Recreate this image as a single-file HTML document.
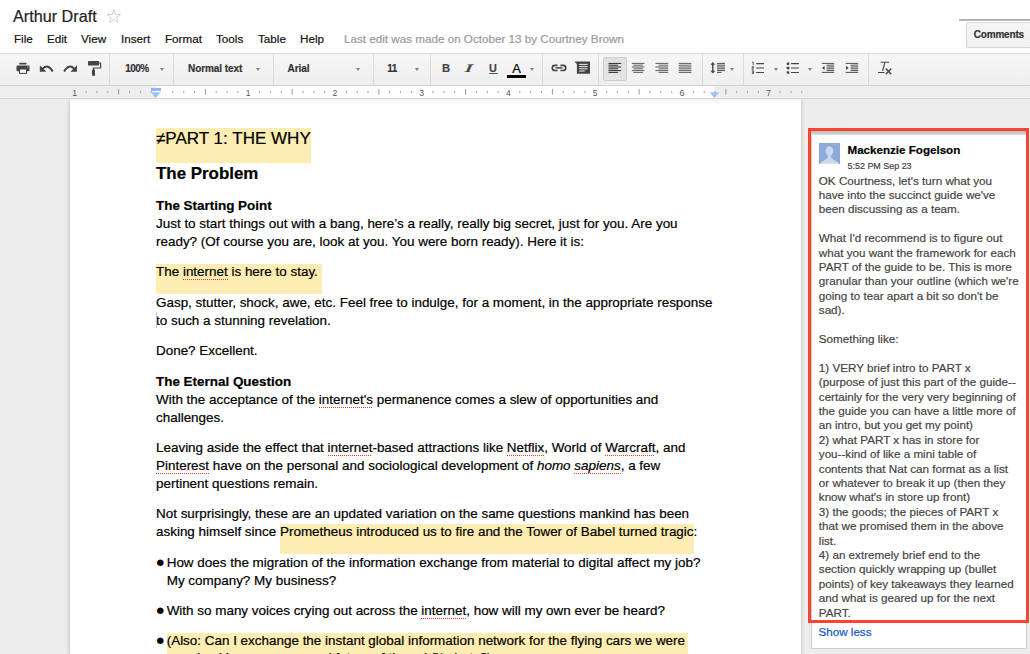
<!DOCTYPE html>
<html><head><meta charset="utf-8"><title>Arthur Draft</title>
<style>
*{box-sizing:border-box}
html,body{margin:0;padding:0}
body{-webkit-text-stroke-width:.2px;width:1030px;height:654px;overflow:hidden;position:relative;background:#fff;font-family:"Liberation Sans",sans-serif;color:#000}
.abs{position:absolute;white-space:nowrap}
#title{left:13px;top:3.8px;font-size:16.2px;line-height:24px;color:#222}
.menu{top:31.8px;font-size:11.66px;line-height:14px;color:#111}
#lastedit{color:#9a9a9a}
#cline{left:959px;top:18.6px;width:71px;height:2.6px;background:linear-gradient(#a6a6a6,#c4c4c4)}
#cbtn{left:966px;top:22px;width:70px;height:26px;border:1px solid #d6d6d6;border-radius:2px;background:linear-gradient(#f5f5f5,#f0f0f0);font-weight:bold;font-size:10px;letter-spacing:-.17px;line-height:24px;padding-left:6.7px;color:#333}
#toolbar{left:0;top:53px;width:1030px;height:33px;border-top:1px solid #d9d9d9;border-bottom:1px solid #d2d2d2;background:linear-gradient(#f6f6f6,#efefef)}
.sep{top:54px;width:1px;height:31px;background:#dadada}
.tbt{top:61.5px;font-size:10px;letter-spacing:-.06px;font-weight:bold;line-height:14px;color:#333}
.arr{width:0;height:0;border-left:2.7px solid transparent;border-right:2.7px solid transparent;border-top:3px solid #808080;top:68.1px}
#ruler{left:0;top:86px;width:1030px;height:13px;background:#eee;border-bottom:1px solid #d4d4d4}
#rwhite{left:156px;top:86px;width:558px;height:12px;background:#fff}
#docbg{left:0;top:99px;width:1030px;height:555px;background:#ededed;overflow:hidden}
#page{left:70px;top:0;width:731px;height:560px;background:#fff;box-shadow:0 0 5px rgba(0,0,0,.22)}
#pshadow{left:70px;top:99px;width:731px;height:5px;background:linear-gradient(rgba(0,0,0,.05),rgba(0,0,0,0))}
.t{margin-top:1px;left:156px;font-size:13.44px;line-height:18px;color:#000}
.b{font-weight:bold}
.hl{background:#fdedb2}
.sp{padding-bottom:1px;background-image:linear-gradient(90deg,#e8392b 50%,transparent 50%);background-size:2px 1px;background-repeat:repeat-x;background-position:0 100%}
.bul{left:156.6px;font-size:8.6px;line-height:12px;margin-top:-.9px;-webkit-text-stroke-width:0;font-family:"DejaVu Sans","Liberation Sans",sans-serif}
#card{left:811px;top:134px;width:216px;height:515px;background:#fff;border:1px solid #cfcfcf}
#red{left:808px;top:128px;width:221px;height:495px;border:3px solid #fb4331}
.c{left:818.8px;font-size:11.66px;line-height:14.4px;color:#444}
</style></head><body>
<div class="abs" id="title">Arthur Draft</div>
<svg class="abs" style="left:100px;top:5px" width="28" height="24" viewBox="100 5 28 24"><path d="M113.90 9.70L115.52 14.48L120.56 14.54L116.52 17.55L118.01 22.36L113.90 19.45L109.79 22.36L111.28 17.55L107.24 14.54L112.28 14.48z" fill="none" stroke="#cecece" stroke-width=".95" stroke-linejoin="miter"/></svg>
<div class="abs menu" style="left:14px">File</div>
<div class="abs menu" style="left:47px">Edit</div>
<div class="abs menu" style="left:81px">View</div>
<div class="abs menu" style="left:121px">Insert</div>
<div class="abs menu" style="left:165px">Format</div>
<div class="abs menu" style="left:216px">Tools</div>
<div class="abs menu" style="left:258px">Table</div>
<div class="abs menu" style="left:300px">Help</div>
<div class="abs menu" id="lastedit" style="left:344px">Last edit was made on October 13 by Courtney Brown</div>
<div class="abs" id="cline"></div>
<div class="abs" id="cbtn">Comments</div>

<div class="abs" id="toolbar"></div>
<!--TOOLBAR-->
<div class="abs sep" style="left:109px"></div>
<div class="abs sep" style="left:173px"></div>
<div class="abs sep" style="left:273px"></div>
<div class="abs sep" style="left:373px"></div>
<div class="abs sep" style="left:430px"></div>
<div class="abs sep" style="left:542px"></div>
<div class="abs sep" style="left:598px"></div>
<div class="abs sep" style="left:702px"></div>
<div class="abs sep" style="left:743px"></div>
<div class="abs sep" style="left:868px"></div>
<div class="abs" style="left:603px;top:57px;width:24px;height:24px;border:1px solid #cdcdcd;border-radius:2px;background:linear-gradient(#e0e0e0,#e6e6e6)"></div>
<div class="abs tbt" style="left:125.2px;letter-spacing:-.5px;font-size:10px">100%</div>
<div class="abs tbt" style="left:188px">Normal text</div>
<div class="abs tbt" style="left:287.6px">Arial</div>
<div class="abs tbt" style="left:387.2px;letter-spacing:-.5px;font-size:10px">11</div>
<div class="abs arr" style="left:160px"></div>
<div class="abs arr" style="left:256.2px"></div>
<div class="abs arr" style="left:356px"></div>
<div class="abs arr" style="left:415.4px"></div>
<div class="abs arr" style="left:529.5px"></div>
<div class="abs arr" style="left:729.5px"></div>
<div class="abs arr" style="left:773.5px"></div>
<div class="abs arr" style="left:807.5px"></div>
<div class="abs" style="left:442px;top:60px;font-size:11.2px;font-weight:bold;line-height:16px;color:#444">B</div>
<div class="abs" style="left:466.3px;top:60px;font-size:11.5px;font-weight:bold;font-style:italic;line-height:16px;color:#444;font-family:'Liberation Serif',serif;transform:scaleX(1.5) skewX(-8deg);transform-origin:50% 70%">I</div>
<div class="abs" style="left:489px;top:59.5px;font-size:10.8px;font-weight:bold;line-height:16px;color:#444">U</div>
<div class="abs" style="left:488.5px;top:73px;width:9.5px;height:1px;background:#555"></div>
<div class="abs" style="left:512.2px;top:59.6px;font-size:12.9px;line-height:18px;color:#000">A</div>
<div class="abs" style="left:507px;top:75px;width:19px;height:2.6px;background:#000"></div>
<svg class="abs" style="left:0;top:53px" width="1030" height="33" viewBox="0 53 1030 33" fill="#444">
<!-- print -->
<g>
<rect x="19.3" y="62.8" width="7.2" height="1.7"/>
<rect x="16.5" y="65.4" width="13" height="5.8" rx="1"/>
<rect x="19.5" y="69" width="7" height="4.4" fill="#f4f4f4" stroke="#444" stroke-width="1"/>
<rect x="27" y="66.6" width="1.2" height="1" fill="#ddd"/>
</g>
<!-- undo -->
<g>
<path d="M39.8 65.2v6.6h6.6z"/>
<path d="M42.6 68.7q5.3-5.4 10.100 2.700" fill="none" stroke="#444" stroke-width="2"/>
</g>
<!-- redo -->
<g>
<path d="M77 65.2v6.6h-6.6z"/>
<path d="M74.2 68.7q-5.3-5.4-10.100 2.700" fill="none" stroke="#444" stroke-width="2"/>
</g>
<!-- paint roller -->
<g>
<rect x="88" y="61" width="11" height="4.6" rx=".6"/>
<path d="M99 63h1.6v5h-7.1v2" fill="none" stroke="#444" stroke-width="1.2"/>
<rect x="92" y="69.6" width="3" height="6.2" rx=".6"/>
</g>
<!-- link -->
<g fill="none" stroke="#444" stroke-width="1.7">
<path d="M557.6 65.3h-2.7a2.6 2.6 0 0 0 0 5.2h2.7M560.4 65.3h2.7a2.6 2.6 0 0 1 0 5.2h-2.7"/>
<path d="M555.6 67.9h6.8" stroke-width="1.5"/>
</g>
<!-- comment -->
<g>
<path d="M574.5 61.6h15.5v12.2h-13.1v-9.6z"/>
<path d="M579.2 64.4h8.4M579.2 66.6h8.4M579.2 68.8h8.4M579.2 71h5.6" stroke="#f2f2f2" stroke-width="1" fill="none"/>
</g>
<!-- align left -->
<g stroke="#222" stroke-width=".95" fill="none">
<path d="M608.5 63.4h12.7M608.5 65.2h9.6M608.5 67h12.7M608.5 68.8h9.6M608.5 70.6h12.7M608.5 72.4h9.6"/>
</g>
<!-- align center -->
<g stroke="#555" stroke-width=".95" fill="none">
<path d="M631.8 63.4h12.7M633.4 65.2h9.5M631.8 67h12.7M633.4 68.8h9.5M631.8 70.6h12.7M633.4 72.4h9.5"/>
</g>
<!-- align right -->
<g stroke="#555" stroke-width=".95" fill="none">
<path d="M655.5 63.4h12.7M658.6 65.2h9.6M655.5 67h12.7M658.6 68.8h9.6M655.5 70.6h12.7M658.6 72.4h9.6"/>
</g>
<!-- justify -->
<g stroke="#555" stroke-width=".95" fill="none">
<path d="M678.7 63.4h12.7M678.7 65.2h12.7M678.7 67h12.7M678.7 68.8h12.7M678.7 70.6h12.7M678.7 72.4h12.7"/>
</g>
<!-- line spacing -->
<g>
<path d="M712.8 62l2.4 2.8h-4.8zM712.8 73.6l2.4-2.8h-4.8z"/>
<rect x="712.1" y="64" width="1.4" height="8"/>
<path d="M717 63.4h8M717 65.2h8M717 67h8M717 68.8h8M717 70.6h8M717 72.4h4.5" stroke="#444" stroke-width=".95" fill="none"/>
</g>
<!-- numbered list -->
<g>
<path d="M756.2 63.6h7.8M756.2 68h7.8M756.2 72.5h7.8" stroke="#444" stroke-width="1.1" fill="none"/>
<path d="M752 62.4l1.2-.4v3.2M751.8 66.6h1.8v1.3h-1.6v1.3h1.8M751.8 70.8h1.8v1.3h-1.3h1.3v1.4h-1.8" stroke="#444" stroke-width=".8" fill="none"/>
</g>
<!-- bullet list -->
<g>
<path d="M791 63.6h8M791 68h8M791 72.5h8" stroke="#444" stroke-width="1.1" fill="none"/>
<rect x="786.8" y="62.4" width="2.5" height="2.5" rx=".4"/><rect x="786.8" y="66.8" width="2.5" height="2.5" rx=".4"/><rect x="786.8" y="71.2" width="2.5" height="2.5" rx=".4"/>
</g>
<!-- outdent -->
<g>
<path d="M821.8 63.4h12.4M826.6 65.2h7.6M826.6 67h7.6M826.6 68.8h7.6M826.6 70.6h7.6M821.8 72.4h12.4" stroke="#444" stroke-width=".95" fill="none"/>
<path d="M824.6 65.8v4.2l-2.6-2.1z"/>
</g>
<!-- indent -->
<g>
<path d="M845.6 63.4h12.6M850.6 65.2h7.6M850.6 67h7.6M850.6 68.8h7.6M850.6 70.6h7.6M845.6 72.4h12.6" stroke="#444" stroke-width=".95" fill="none"/>
<path d="M846 65.8v4.2l2.6-2.1z"/>
</g>
<!-- clear formatting -->
<g fill="none" stroke="#444">
<path d="M880.6 62.2h8.4M885 62.2l-2.4 8.8" stroke-width="1.1"/>
<path d="M878 72.5h6.6" stroke-width="1"/>
<path d="M885.8 68.4l5.4 5.8M891.2 68.4l-5.4 5.8" stroke-width="1.4"/>
</g>
</svg>
<!--/TOOLBAR-->
<div class="abs" id="ruler"></div>
<div class="abs" id="rwhite"></div>
<!--RULER-->
<svg class="abs" style="left:0;top:86px" width="1030" height="13" viewBox="0 86 1030 13">
<path d="M86.1 91v2.2M96.9 91v2.2M107.8 91v2.2M129.5 91v2.2M140.3 91v2.2M151.2 91v2.2M172.8 91v2.2M183.7 91v2.2M194.5 91v2.2M216.2 91v2.2M227.1 91v2.2M237.9 91v2.2M259.6 91v2.2M270.4 91v2.2M281.3 91v2.2M303.0 91v2.2M313.8 91v2.2M324.7 91v2.2M346.3 91v2.2M357.2 91v2.2M368.0 91v2.2M389.7 91v2.2M400.6 91v2.2M411.4 91v2.2M433.1 91v2.2M443.9 91v2.2M454.8 91v2.2M476.5 91v2.2M487.3 91v2.2M498.2 91v2.2M519.8 91v2.2M530.7 91v2.2M541.5 91v2.2M563.2 91v2.2M574.1 91v2.2M584.9 91v2.2M606.6 91v2.2M617.4 91v2.2M628.3 91v2.2M650.0 91v2.2M660.8 91v2.2M671.7 91v2.2M693.3 91v2.2M704.2 91v2.2M715.0 91v2.2M736.7 91v2.2M747.6 91v2.2M758.4 91v2.2M780.1 91v2.2M790.9 91v2.2M801.8 91v2.2" stroke="#a2a2a2" stroke-width="1" fill="none"/>
<path d="M118.6 89v5.6M205.4 89v5.6M292.1 89v5.6M378.9 89v5.6M465.6 89v5.6M552.4 89v5.6M639.1 89v5.6M725.9 89v5.6" stroke="#999" stroke-width="1" fill="none"/>
<g font-family="Liberation Sans, sans-serif" font-size="8.6" fill="#55555f"><text x="74.7" y="95.6" text-anchor="middle">1</text><text x="248.2" y="95.6" text-anchor="middle">1</text><text x="334.9" y="95.6" text-anchor="middle">2</text><text x="421.6" y="95.6" text-anchor="middle">3</text><text x="508.4" y="95.6" text-anchor="middle">4</text><text x="595.1" y="95.6" text-anchor="middle">5</text><text x="681.9" y="95.6" text-anchor="middle">6</text><text x="768.6" y="95.6" text-anchor="middle">7</text></g>
<rect x="151" y="88" width="10" height="2.9" fill="#8fb5f6"/>
<path d="M151 92.2h9.6l-4.9 5.7z" fill="#9dc1fa"/>
<path d="M709.6 92.2h9.6l-4.8 5.7z" fill="#9dc1fa"/>
</svg>
<!--/RULER-->
<div class="abs" id="docbg"><div class="abs" id="page"></div></div>
<div class="abs" id="pshadow"></div>
<!--DOC-->
<div class="abs hl" style="left:156px;top:128px;width:155px;height:34.6px"></div>
<div class="abs" style="left:156px;top:128px;font-size:17.05px;line-height:22px">≠PART 1: THE WHY</div>
<div class="abs b" style="left:156px;top:163px;font-size:16.9px;line-height:22px">The Problem</div>
<div class="abs t b" style="top:196px">The Starting Point</div>
<div class="abs t" style="top:214.3px">Just to start things out with a bang, here’s a really, really big secret, just for you. Are you<br>ready? (Of course you are, look at you. You were born ready). Here it is:</div>
<div class="abs hl" style="left:156px;top:264px;width:166px;height:29.6px"></div>
<div class="abs t" style="top:262px">The <span class="sp">internet</span> is here to stay.</div>
<div class="abs t" style="top:293px">Gasp, stutter, shock, awe, etc. Feel free to indulge, for a moment, in the appropriate response<br>to such a stunning revelation.</div>
<div class="abs" style="left:156px;top:312px;width:1px;height:16px;background:#c4c4c4"></div>
<div class="abs t" style="top:341px">Done? Excellent.</div>
<div class="abs t b" style="top:372px">The Eternal Question</div>
<div class="abs t" style="top:390px">With the acceptance of the <span class="sp">internet's</span> permanence comes a slew of opportunities and<br>challenges.</div>
<div class="abs t" style="top:438px">Leaving aside the effect that <span class="sp">internet</span>-based attractions like <span class="sp">Netflix</span>, World of <span class="sp">Warcraft</span>, and<br><span class="sp">Pinterest</span> have on the personal and sociological development of <i>homo <span class="sp">sapiens</span></i>, a few<br>pertinent questions remain.</div>
<div class="abs hl" style="left:280px;top:524px;width:414px;height:29.6px"></div>
<div class="abs t" style="top:504px">Not surprisingly, these are an updated variation on the same questions mankind has been<br>asking himself since Prometheus introduced us to fire and the Tower of Babel turned tragic:</div>
<div class="abs bul" style="top:556.6px">●</div>
<div class="abs t" style="left:166.7px;top:553px">How does the migration of the information exchange from material to digital affect my job?<br>My company? My business?</div>
<div class="abs bul" style="top:604.6px">●</div>
<div class="abs t" style="left:166.7px;top:601px">With so many voices crying out across the <span class="sp">internet</span>, how will my own ever be heard?</div>
<div class="abs hl" style="left:167px;top:633px;width:521px;height:30px"></div>
<div class="abs bul" style="top:634.6px">●</div>
<div class="abs t" style="left:166.7px;top:631px">(Also: Can I exchange the instant global information network for the flying cars we were<br><span style="position:relative;top:-1.2px">promised in my space-aged future of the sci-fi/robots?)</span></div>
<!--/DOC-->
<!--COMMENT-->
<div class="abs" id="card"></div>
<div class="abs" style="left:811px;top:131px;width:215px;height:4px;background:linear-gradient(#b2b9b9,#dedede)"></div>
<svg class="abs" style="left:819px;top:143px" width="21" height="21" viewBox="0 0 21 21"><defs><linearGradient id="avg" x1="0" y1="0" x2="0" y2="1"><stop offset="0" stop-color="#cbd7ef"/><stop offset=".8" stop-color="#cbd7ef"/><stop offset="1" stop-color="#dfe7f6"/></linearGradient></defs><rect width="21" height="21" fill="#8fa9db"/><ellipse cx="10.4" cy="8" rx="3.9" ry="4.7" fill="#cbd7ef"/><path d="M8.8 11v3.4q-.2.8-1.500 1.500L2.200 19.300Q1.300 20 1.200 21h18.500q-.1-1-1-1.700l-5.100-3.400q-1.300-.7-1.500-1.500V11z" fill="url(#avg)"/></svg>
<div class="abs b" style="left:847.5px;top:143px;font-size:11.6px;line-height:14px;color:#000">Mackenzie Fogelson</div>
<div class="abs" style="left:847.5px;top:160px;font-size:8.95px;line-height:12px;color:#444">5:52 PM Sep 23</div>
<div class="abs c" style="top:173.5px">OK Courtness, let's turn what you<br>have into the succinct guide we've<br>been discussing as a team.<br><br>What I'd recommend is to figure out<br>what you want the framework for each<br>PART of the guide to be. This is more<br>granular than your outline (which we're<br>going to tear apart a bit so don't be<br>sad).<br><br>Something like:<br><br>1) VERY brief intro to PART x<br>(purpose of just this part of the guide--<br>certainly for the very very beginning of<br>the guide you can have a little more of<br>an intro, but you get my point)<br>2) what PART x has in store for<br>you--kind of like a mini table of<br>contents that Nat can format as a list<br>or whatever to break it up (then they<br>know what's in store up front)<br>3) the goods; the pieces of PART x<br>that we promised them in the above<br>list.<br>4) an extremely brief end to the<br>section quickly wrapping up (bullet<br>points) of key takeaways they learned<br>and what is geared up for the next<br>PART.</div>
<div class="abs" style="left:818.6px;top:624.8px;font-size:11.6px;line-height:14.4px;color:#15c">Show less</div>
<div class="abs" id="red"></div>
<!--/COMMENT-->
</body></html>
